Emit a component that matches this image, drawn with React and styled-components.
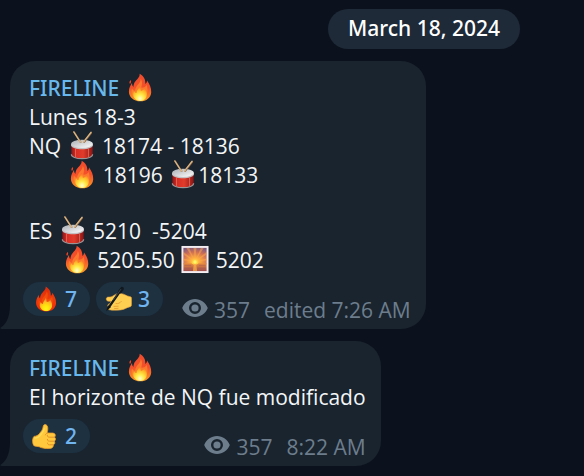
import React from "react";
import styled, { createGlobalStyle } from "styled-components";

const GlobalStyle = createGlobalStyle`
  * { box-sizing: border-box; }
  body {
    margin: 0;
    min-height: 100vh;
    background: #0c121d;
    color: #f3f5f6;
    font-family: "Open Sans", "Noto Sans", sans-serif;
    font-size: 21px;
    line-height: 29px;
    overflow-x: hidden;
  }
`;

const Chat = styled.main`
  display: flex;
  flex-direction: column;
  align-items: flex-start;
  gap: 12px;
  padding: 9px 10px 10px;
`;

const DateBadge = styled.time`
  align-self: flex-end;
  margin-right: 54px;
  padding: 5px 20px 6px;
  border-radius: 20px;
  background: #1e2a38;
  color: #ffffff;
  font-family: "Noto Sans", "Open Sans", sans-serif;
  font-weight: 500;
`;

const Bubble = styled.article`
  position: relative;
  max-width: 100%;
  padding: 13px 15px 5px 13px;
  border-radius: 25px 25px 25px 0;
  background: #19242f;
`;

const Tail = styled.svg`
  position: absolute;
  left: -10px;
  bottom: 0;
  width: 10px;
  height: 24px;
  fill: #19242f;
`;

const Author = styled.h2`
  margin: 0;
  padding-left: 6px;
  font-family: "Noto Sans", "Open Sans", sans-serif;
  font-size: 21px;
  line-height: 29px;
  font-weight: 500;
  color: #69b8ec;
  white-space: pre;
`;

const Line = styled.p`
  margin: 0;
  padding-left: 6px;
  white-space: pre;
`;

const BlankLine = styled.div`
  height: 27px;
`;

const Footer = styled.footer`
  display: flex;
  align-items: flex-start;
  justify-content: space-between;
  gap: 19px;
  margin-top: 7px;
`;

const Reactions = styled.div`
  display: flex;
  gap: 6px;
`;

const Reaction = styled.button`
  display: flex;
  align-items: center;
  gap: 5px;
  width: 67px;
  height: 34px;
  padding: 0 0 0 9px;
  border: 0;
  border-radius: 17px;
  background: #1d3141;
  color: #70b4f0;
  font: 500 21px "Noto Sans", "Open Sans", sans-serif;
  cursor: pointer;
`;

const Meta = styled.div`
  display: flex;
  align-items: center;
  gap: 14px;
  padding-top: 14px;
  font-size: 21px;
  line-height: 28px;
  color: #6d7d8c;
  white-space: nowrap;
`;

const Views = styled.span`
  display: flex;
  align-items: center;
  gap: 6px;
`;

const EyeSvg = styled.svg`
  width: 26px;
  height: 20px;
  margin-top: -4px;
`;

const Glyph = styled.svg`
  display: inline-block;
  width: ${(p) => (p.$small ? "28px" : "30px")};
  height: ${(p) => (p.$small ? "26px" : "29px")};
  margin: ${(p) => (p.$small ? "0" : "-6px 0")};
  vertical-align: ${(p) => (p.$small ? "middle" : "baseline")};
  flex: none;
`;

function Fire({ small }) {
  const id = small ? "flameSmall" : "flame";
  return (
    <Glyph $small={small} viewBox="0 0 30 30" role="img" aria-label="fire">
      <defs>
        <linearGradient id={id} x1="0" y1="0" x2="0" y2="1">
          <stop offset="0" stopColor={small ? "#d92c0d" : "#f04b2c"} />
          <stop offset=".5" stopColor={small ? "#ee3b0b" : "#f4512b"} />
          <stop offset="1" stopColor={small ? "#f12c05" : "#fb9a25"} />
        </linearGradient>
        <radialGradient id={id + "Core"} cx=".5" cy=".85" r=".8">
          <stop offset="0" stopColor={small ? "#fff51b" : "#fffbd0"} />
          <stop offset=".35" stopColor={small ? "#ffe30c" : "#ffeb49"} />
          <stop offset=".72" stopColor="#ffb426" />
          <stop offset="1" stopColor="#fb6b26" />
        </radialGradient>
      </defs>
      <path
        fill={`url(#${id})`}
        d="M14.6.7c4.7 2.7 6.1 6.2 6 10.8 1.1-.9 1.6-2.2 1.7-3.7 2.6 3.6 4.5 7.5 4.3 12-.3 5.5-4.8 9.5-11.4 9.5S3.6 25.1 3.5 19.4c0-3.8 1.7-6.6 3.3-9.2-.1 2 .3 3.3 1.4 4.3.2-4.6 2.2-6.2 4.6-8.9 1.4-1.6 2-3 1.8-4.9Z"
      />
      {!small && <path fill="#f04525" d="M5.6 7.2c-1.8 1.2-2 2.9-.9 4.2 1-1.3 1.4-2.6.9-4.2Z" />}
      <path
        fill={small ? "#f7570c" : "#ff8a30"}
        opacity=".7"
        d="M15.8 6.1c2.5 3.6.6 6.3.8 9.2 2.5-.3 4.4-1.2 5.5-2.9 2 8.7-.6 14.4-6.8 14.8C8 27.3 5.2 22.5 6.7 16c.8 1.8 1.9 2.5 3.4 2.6-.3-5.7 5.1-6.8 5.7-12.5Z"
      />
      <path
        fill={`url(#${id}Core)`}
        d="M14.5 13.2c1.4 2.2.8 3.8 1.4 5.4 1.8-.2 3.1-1.1 4.1-2.7 2 3.2 2.6 6.2 1.6 8.8-1.1 2.8-3.6 4.2-6.5 4.2-4.1 0-7.6-3.2-7.1-7.6.2-1 .4-1.8.8-2.5.8 1.2 1.5 1.8 2.6 2 .1-3.4 2.9-4.3 3.1-7.6Z"
      />
    </Glyph>
  );
}

function Drum() {
  return (
    <Glyph viewBox="0 0 30 30" role="img" aria-label="drum">
      <defs>
        <linearGradient id="drumSide">
          <stop offset="0" stopColor="#8f1717" />
          <stop offset=".22" stopColor="#d72d25" />
          <stop offset=".55" stopColor="#e13c2b" />
          <stop offset="1" stopColor="#8d1515" />
        </linearGradient>
        <linearGradient id="drumHead" x1="0" y1="0" x2="1" y2="1">
          <stop offset="0" stopColor="#a9adb2" />
          <stop offset="1" stopColor="#ffffff" />
        </linearGradient>
      </defs>
      <path fill="url(#drumSide)" d="M4 13.5v10.4c0 2.9 4.7 5 11 5s11-2.1 11-5V13.5Z" />
      <path d="M8.3 18.5V27M21.8 18.5V27" stroke="#e8735f" strokeWidth=".8" />
      <path d="M4 24c0 2.8 4.9 4.6 11 4.6s11-1.8 11-4.6" fill="none" stroke="#9a9496" strokeWidth="1.2" />
      <path d="M3.7 13.5v1.4c1.1 2.6 5.3 3.9 11.3 3.9s10.2-1.3 11.3-3.9v-1.4" fill="#c3bfc1" />
      <ellipse cx="15" cy="13.3" rx="11.3" ry="4.2" fill="url(#drumHead)" />
      <path d="M6.9 1.2 13.5 11.5M24.5 2 17.1 11.5" stroke="#846044" strokeWidth="1.8" strokeLinecap="round" />
      <path d="M6.5.9 13 11M24.4 1.3 16.8 11" stroke="#dcb783" strokeWidth="1.3" strokeLinecap="round" />
      <circle cx="13.3" cy="11.2" r="1" fill="#d9b788" />
      <circle cx="16.9" cy="11.2" r="1" fill="#d9b788" />
    </Glyph>
  );
}

function Sunrise() {
  return (
    <Glyph viewBox="0 0 30 30" role="img" aria-label="sunrise">
      <defs>
        <radialGradient id="dawnSky" cx=".5" cy=".8" r=".9">
          <stop offset="0" stopColor="#ffe94d" />
          <stop offset=".22" stopColor="#ffad3d" />
          <stop offset=".6" stopColor="#d06f55" />
          <stop offset="1" stopColor="#765985" />
        </radialGradient>
        <linearGradient id="dawnSea" x1="0" y1="0" x2="0" y2="1">
          <stop offset="0" stopColor="#e98d3f" />
          <stop offset="1" stopColor="#a04e50" />
        </linearGradient>
      </defs>
      <path fill="#f4eef2" d="M1 1h28v28H1z" />
      <path fill="url(#dawnSky)" d="M3 3h24v17H3z" />
      <path
        fill="#ffac4b"
        opacity=".5"
        d="m15 17-1.5-14h3ZM15 17 6 3h3ZM15 17 21 3h3ZM15 17 3 7v3ZM15 17 27 7v3ZM15 17 3 14v2ZM15 17l12-3v2Z"
      />
      <path fill="url(#dawnSea)" d="M3 19h24v8H3z" />
      <path fill="#ffd044" d="M11.5 19a3.5 3.5 0 0 1 7 0L17 20.200h-4Z" />
      <circle cx="15" cy="17.6" r="1.8" fill="#fff56b" />
      <path d="M4 21h7M19 21h7M4 24h8M18 24h8" stroke="#944f58" strokeWidth=".7" opacity=".6" />
      <path fill="#ffb043" opacity=".7" d="M13.8 20h2.4l1 7h-4.4Z" />
    </Glyph>
  );
}

function WritingHand() {
  return (
    <Glyph $small viewBox="0 0 28 26" role="img" aria-label="writing hand">
      <path
        fill="#ffcf52"
        stroke="#e8a03a"
        strokeWidth=".6"
        d="M1.6 14.2c-1-1.600.2-3.200 1.800-3.100 2.200.1 3.600-.5 5.200-1.600 2.400-1.700 4.700-2.300 7.300-2 3.800.5 5.800 2.700 8.600 3 1.300.2 2 .6 2 1.700v6.600c0 1.400-.7 1.900-2 2.100-3 .5-4.700 2.700-8.800 3-4.200.3-8.200.6-11.400-.2-1.500-.4-1.600-1.900-.6-2.500-1.500-.6-1.500-2.300-.2-3 .7-.4 1.300-.7 1.700-1.200l1-1.900c-1.900.3-3.700.4-4.600-.9Z"
      />
      <path
        d="M11 17.600c2.200.3 4-.6 5.300-2.200M9 20.400l4.200-.2M9.500 22.600l3.600-.3"
        fill="none"
        stroke="#e69c31"
        strokeWidth=".9"
        strokeLinecap="round"
      />
      <path d="M4.300 20.600 16.600 3" stroke="#11191f" strokeWidth="2.400" strokeLinecap="round" />
      <path d="m1.200 25.200 1.700-6 2.900 2Z" fill="#101519" />
      <path d="m13 5.200 2.700-3.800c1.200-1.500 4 .3 3 2.200l-2.800 4.200Z" fill="#11191f" />
      <path d="m8.500 13.800 7.200-10.300" stroke="#4c5359" strokeWidth=".7" strokeLinecap="round" />
    </Glyph>
  );
}

function ThumbsUp() {
  return (
    <Glyph $small viewBox="0 0 28 26" role="img" aria-label="thumbs up">
      <path
        fill="#ffc83d"
        stroke="#f0a02d"
        strokeWidth=".8"
        d="M2 13.400c2.300-.2 4-.9 5.500-2.900 1.700-2.200 3.300-3.700 3.600-6.500.2-1.900 1.200-2.700 2.400-2.400 2.500.7 2.800 4.100 1.600 8.400l5.900.1c2.300.1 3 2.800 1.500 4.100 1.500 1.100 1.300 3.100-.2 4 1 1.300.5 3-1 3.500.3 2.300-1.200 3.600-3.500 3.700-4.300.2-7.700-.1-10.700-1.700L2.400 23C.2 21.200 0 15.600 2 13.400Z"
      />
      <path
        d="M15.300 10.200c-1 .2-1.800.8-2 1.700M22.500 14.200h-4.800c-1.900 0-2.400-.7-2.400-2M22.200 18.200h-4.600c-1.600 0-2.200-.7-2.200-1.800M21.200 21.800h-3.800c-1.200 0-1.900-.7-1.900-1.700"
        fill="none"
        stroke="#df8c25"
        strokeWidth=".9"
        strokeLinecap="round"
      />
      <path d="M3 15c2.700-.1 4.500-1.500 5.700-3.200 1.800-2.400 3-3.400 3.600-6.200" fill="none" stroke="#ffdc58" strokeWidth="1.300" strokeLinecap="round" />
    </Glyph>
  );
}

function Eye() {
  return (
    <EyeSvg viewBox="0 0 26 20" aria-hidden="true">
      <path
        fill="#6d7d8c"
        fillRule="evenodd"
        d="M13 1C7.2 1 2.4 4.5.2 10 2.4 15.500 7.2 19 13 19s10.6-3.500 12.8-9C23.6 4.500 18.8 1 13 1Zm0 3a6 6 0 1 1 0 12 6 6 0 0 1 0-12Z"
      />
      <circle cx="13" cy="10" r="3.6" fill="#6d7d8c" />
    </EyeSvg>
  );
}

function Message({ children, reactions, time }) {
  return (
    <Bubble>
      <Tail viewBox="0 0 10 24" aria-hidden="true">
        <path d="M10 0v24H2c-2 0-2-1-.5-2C7 18.5 10 10 10 0Z" />
      </Tail>
      <Author>FIRELINE <Fire /></Author>
      {children}
      <Footer>
        <Reactions>
          {reactions.map(({ icon, count }) => (
            <Reaction key={count} type="button">{icon}{count}</Reaction>
          ))}
        </Reactions>
        <Meta>
          <Views><Eye />357</Views>
          <span>{time}</span>
        </Meta>
      </Footer>
    </Bubble>
  );
}

export default function App() {
  return (
    <>
      <GlobalStyle />
      <Chat>
        <DateBadge dateTime="2024-03-18">March 18, 2024</DateBadge>
        <Message
          time="edited 7:26 AM"
          reactions={[
            { icon: <Fire small />, count: 7 },
            { icon: <WritingHand />, count: 3 },
          ]}
        >
          <Line>Lunes 18-3</Line>
          <Line>NQ <Drum /> 18174 - 18136</Line>
          <Line>{"       "}<Fire /> 18196 <Drum />18133</Line>
          <BlankLine />
          <Line>ES <Drum />{" 5210  -5204"}</Line>
          <Line>{"      "}<Fire /> 5205.50 <Sunrise /> 5202</Line>
        </Message>
        <Message time="8:22 AM" reactions={[{ icon: <ThumbsUp />, count: 2 }]}>
          <Line>El horizonte de NQ fue modificado</Line>
        </Message>
      </Chat>
    </>
  );
}
